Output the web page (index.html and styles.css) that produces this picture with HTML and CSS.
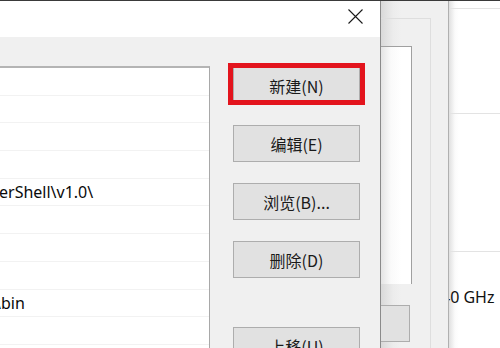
FILE: index.html
```html
<!DOCTYPE html>
<html>
<head>
<meta charset="utf-8">
<link rel="stylesheet" href="styles.css">
</head>
<body>
<div class="screen">
  <div class="dialog">
    <div class="titlebar">
      <svg class="close" width="15" height="15" viewBox="0 0 15 15"><path d="M0.5 0.5 L14.5 14.5 M14.5 0.5 L0.5 14.5" stroke="#1a1a1a" stroke-width="1.1" fill="none"/></svg>
    </div>
    <div class="body">
      <div class="list">
        <div class="row"></div>
        <div class="row"></div>
        <div class="row"></div>
        <div class="row"></div>
        <div class="row"><span class="txt t1">erShell\v1.0\</span></div>
        <div class="row"></div>
        <div class="row"></div>
        <div class="row"></div>
        <div class="row"><span class="txt t2">\bin</span></div>
        <div class="row"></div>
        <div class="row"></div>
      </div>
      <div class="buttons">
        <div class="btn highlighted">新建(N)<span class="mark"></span></div>
        <div class="btn">编辑(E)</div>
        <div class="btn">浏览(B)...</div>
        <div class="btn">删除(D)</div>
        <div class="btn later">上移(U)</div>
      </div>
    </div>
  </div>
  <div class="bgwin">
    <div class="frame">
      <div class="bglist"></div>
      <div class="bgbtn"></div>
    </div>
  </div>
  <div class="sysprop">
    <div class="sline s1"></div>
    <div class="sline s2"></div>
    <div class="sline s3"></div>
    <div class="ghz">40 GHz</div>
  </div>
</div>
</body>
</html>
```
FILE: styles.css
```css
html, body {
  margin: 0;
  padding: 0;
}
body {
  width: 500px;
  height: 348px;
  overflow: hidden;
  background: #f0f0f0;
  font-family: "Noto Sans", "Noto Sans CJK SC", sans-serif;
}
.screen {
  display: flex;
  height: 347px;
  border-top: 1px solid #3a3a3a;
  overflow: hidden;
}
.dialog {
  width: 380px;
  flex: none;
  border-right: 1px solid #8a8a8a;
  display: flex;
  flex-direction: column;
  background: #f0f0f0;
  position: relative;
  z-index: 2;
}
.titlebar {
  height: 36px;
  background: #fff;
  display: flex;
  justify-content: flex-end;
  align-items: flex-start;
  padding: 8px 17px 0 0;
  box-sizing: border-box;
}
.close {
  display: block;
}
.body {
  flex: 1;
  display: flex;
  align-items: flex-start;
  min-height: 0;
}
.list {
  width: 209px;
  margin-top: 29px;
  background: #fff;
  border-top: 2px solid #b4b4b4;
  border-right: 1px solid #a8a8a8;
  flex: none;
  overflow: hidden;
}
.row {
  height: 27.7px;
  box-sizing: border-box;
  border-bottom: 1px solid #f2f2f2;
  display: flex;
  align-items: center;
  white-space: nowrap;
  font-size: 16px;
  color: #0a0a0a;
}
.t1 {
  margin-left: -1px;
}
.t2 {
  margin-left: -5px;
}
.buttons {
  margin-left: 23px;
  margin-top: 30px;
  width: 127px;
  display: flex;
  flex-direction: column;
  gap: 21px;
}
.btn {
  height: 37px;
  box-sizing: border-box;
  background: #e1e1e1;
  border: 1px solid #adadad;
  display: flex;
  align-items: center;
  justify-content: center;
  font-family: "Noto Sans CJK SC", sans-serif;
  font-size: 16px;
  color: #1a1a1a;
  position: relative;
}
.later {
  margin-top: 28px;
}
.mark {
  position: absolute;
  left: -6px;
  right: -6px;
  top: -5px;
  bottom: -2px;
  border: 5px solid #e3141d;
}
.bgwin {
  width: 67px;
  flex: none;
  background: linear-gradient(to right, #d9d9d9, #ececec 12px, #f0f0f0 20px);
  border-right: 1px solid #b0b0b0;
}
.frame {
  margin-top: 17px;
  width: 49px;
  height: 400px;
  border-top: 1px solid #dedede;
  border-right: 1px solid #dedede;
  padding-top: 27px;
}
.bglist {
  width: 30px;
  height: 237px;
  background: linear-gradient(to right, #e4e4e4, #fafafa 10px, #fff 20px);
  border-top: 1px solid #a0a0a0;
  border-right: 1px solid #a0a0a0;
}
.bgbtn {
  margin-top: 21px;
  width: 29px;
  height: 37px;
  box-sizing: border-box;
  background: #e1e1e1;
  border: 1px solid #adadad;
  border-left: none;
}
.sysprop {
  flex: 1;
  background: linear-gradient(to right, #e0e0e0, #fbfbfb 6px, #fff 10px);
  overflow: hidden;
  display: flex;
  flex-direction: column;
}
.sline {
  border-bottom: 1px solid #e3e3e3;
}
.s1 { height: 7px; }
.s2 { height: 104px; }
.s3 { height: 137px; }
.ghz {
  margin-top: 34px;
  margin-left: -8px;
  white-space: nowrap;
  font-size: 16px;
  color: #111;
}
```
